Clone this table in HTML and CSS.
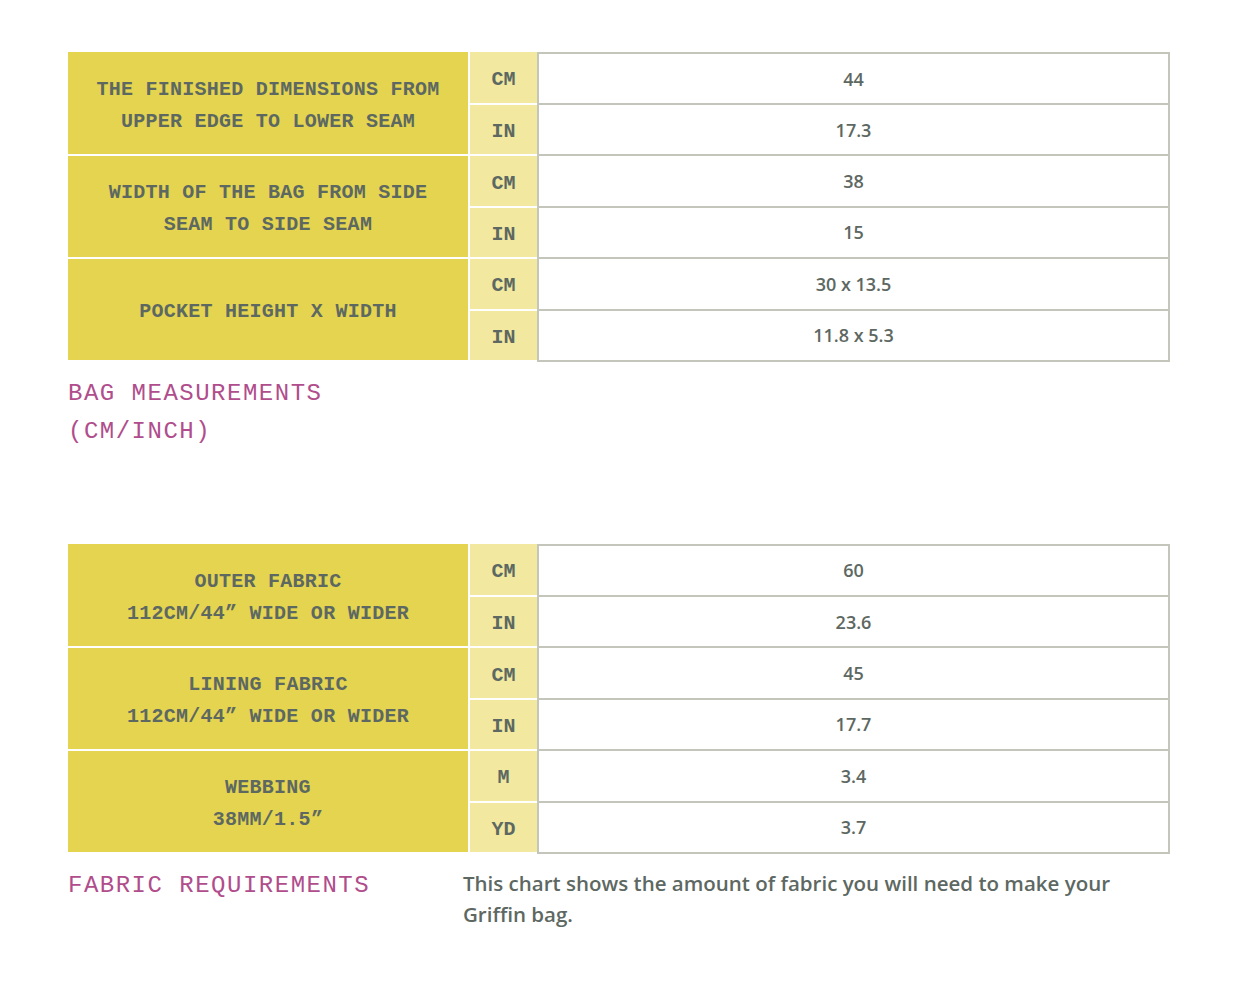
FILE: index.html
```html
<!DOCTYPE html>
<html lang="en">
<head>
<meta charset="utf-8">
<title>Griffin bag</title>
<link rel="stylesheet" href="styles.css">
</head>
<body>
<main class="page">
  <section class="block">
    <table class="chart">
      <tbody>
        <tr class="top-row">
          <td class="label" rowspan="2">THE FINISHED DIMENSIONS FROM<br>UPPER EDGE TO LOWER SEAM</td>
          <td class="unit">CM</td>
          <td class="value first">44</td>
        </tr>
        <tr>
          <td class="unit">IN</td>
          <td class="value">17.3</td>
        </tr>
        <tr>
          <td class="label" rowspan="2">WIDTH OF THE BAG FROM SIDE<br>SEAM TO SIDE SEAM</td>
          <td class="unit">CM</td>
          <td class="value">38</td>
        </tr>
        <tr>
          <td class="unit">IN</td>
          <td class="value">15</td>
        </tr>
        <tr>
          <td class="label" rowspan="2">POCKET HEIGHT X WIDTH</td>
          <td class="unit">CM</td>
          <td class="value">30 x 13.5</td>
        </tr>
        <tr>
          <td class="unit">IN</td>
          <td class="value">11.8 x 5.3</td>
        </tr>
      </tbody>
    </table>
    <div class="foot">
      <h2 class="caption">BAG MEASUREMENTS<br>(CM/INCH)</h2>
    </div>
  </section>

  <section class="block second">
    <table class="chart">
      <tbody>
        <tr class="top-row">
          <td class="label" rowspan="2">OUTER FABRIC<br>112CM/44” WIDE OR WIDER</td>
          <td class="unit">CM</td>
          <td class="value first">60</td>
        </tr>
        <tr>
          <td class="unit">IN</td>
          <td class="value">23.6</td>
        </tr>
        <tr>
          <td class="label" rowspan="2">LINING FABRIC<br>112CM/44” WIDE OR WIDER</td>
          <td class="unit">CM</td>
          <td class="value">45</td>
        </tr>
        <tr>
          <td class="unit">IN</td>
          <td class="value">17.7</td>
        </tr>
        <tr>
          <td class="label" rowspan="2">WEBBING<br>38MM/1.5”</td>
          <td class="unit">M</td>
          <td class="value">3.4</td>
        </tr>
        <tr>
          <td class="unit">YD</td>
          <td class="value">3.7</td>
        </tr>
      </tbody>
    </table>
    <div class="foot">
      <h2 class="caption">FABRIC REQUIREMENTS</h2>
      <p class="desc">This chart shows the amount of fabric you will need to make your Griffin bag.</p>
    </div>
  </section>
</main>
</body>
</html>
```

FILE: styles.css
```css
html, body {
  margin: 0;
  padding: 0;
  background: #ffffff;
}

.page {
  width: 1102px;
  padding: 52px 0 0 68px;
}

.block.second {
  margin-top: 93px;
}

.chart {
  width: 1102px;
  border-collapse: separate;
  border-spacing: 0;
  table-layout: fixed;
}

.chart tr {
  height: 51.4px;
}

.chart tr.top-row {
  height: 53px;
}

.chart td {
  padding: 0;
  text-align: center;
  vertical-align: middle;
  color: #5d6862;
}

.label {
  width: 400px;
  background: #e4d44f;
  border-right: 2px solid #ffffff;
  border-bottom: 2px solid #ffffff;
  font-family: "Liberation Mono", "Courier New", monospace;
  font-weight: 700;
  font-size: 20px;
  letter-spacing: 0.25px;
  line-height: 32px;
}

.chart td.label {
  padding-top: 5px;
}

.unit {
  width: 67px;
  background: #f2e8a0;
  border-bottom: 2px solid #ffffff;
  font-family: "Liberation Mono", "Courier New", monospace;
  font-weight: 700;
  font-size: 20px;
}

.chart td.unit {
  padding-top: 4px;
}

.value {
  border-left: 2px solid #c4c6bc;
  border-right: 2px solid #c4c6bc;
  border-bottom: 2px solid #c4c6bc;
  font-family: "Open Sans", sans-serif;
  font-weight: 600;
  font-size: 18px;
}

.chart td.value.first {
  border-top: 2px solid #c4c6bc;
}

.foot {
  display: flex;
  align-items: flex-start;
  margin-top: 13px;
}

.caption {
  width: 395px;
  flex: none;
  margin: 0;
  font-family: "Liberation Mono", "Courier New", monospace;
  font-weight: 400;
  font-size: 24px;
  letter-spacing: 1.5px;
  line-height: 38px;
  color: #b04d8c;
}

.desc {
  margin: 1px 0 0 0;
  flex: 1;
  font-family: "Open Sans", sans-serif;
  font-weight: 600;
  font-size: 20.5px;
  line-height: 31px;
  color: #5d6862;
}
```
